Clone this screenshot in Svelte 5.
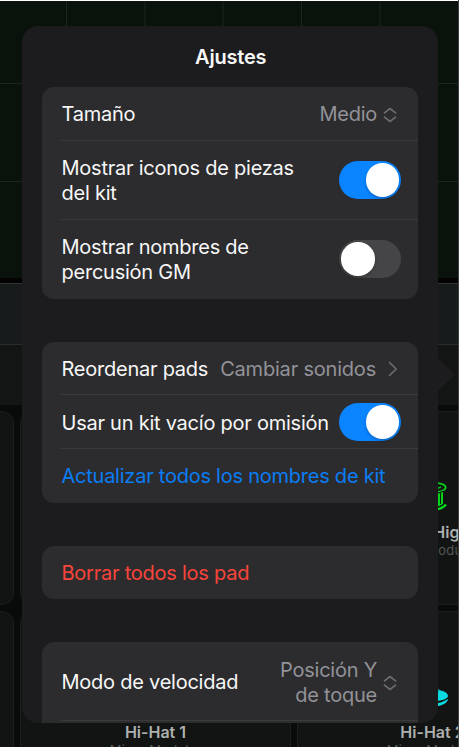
<script lang="ts">
  type Row = {
    label: string;
    kind: 'select' | 'toggle' | 'link' | 'action' | 'danger';
    value?: string;
    on?: boolean;
    size?: string;
  };

  let groups: Row[][] = $state([
    [
      { label: 'Tamaño', kind: 'select', value: 'Medio' },
      { label: 'Mostrar iconos de piezas del kit', kind: 'toggle', on: true, size: 'tall' },
      { label: 'Mostrar nombres de percusión GM', kind: 'toggle', on: false, size: 'tall' }
    ],
    [
      { label: 'Reordenar pads', kind: 'link', value: 'Cambiar sonidos' },
      { label: 'Usar un kit vacío por omisión', kind: 'toggle', on: true },
      { label: 'Actualizar todos los nombres de kit', kind: 'action' }
    ],
    [{ label: 'Borrar todos los pad', kind: 'danger' }],
    [
      { label: 'Modo de velocidad', kind: 'select', value: 'Posición Y de toque', size: 'tall' },
      { label: '', kind: 'action' }
    ]
  ]);

  const pads = [
    { name: '', kit: '', icon: '' },
    { name: '', kit: '', icon: '' },
    { name: 'Tom High', kit: 'Micro Modular', icon: 'drum' },
    { name: '', kit: '', icon: '' },
    { name: 'Hi-Hat 1', kit: 'Micro Modular', icon: 'hat' },
    { name: 'Hi-Hat 2', kit: 'Micro Modular', icon: 'hat' }
  ];
</script>

<div class="screen">
  <div class="timeline">
    <svg width="459" height="277">
      <path class="grid" d="M66.5 0V277M145 0V277M223 0V277M301.5 0V277M380 0V277M0 82.5H459M0 180.5H459" />
    </svg>
  </div>
  <div class="bar upper"></div>
  <div class="bar lower"></div>
  <div class="pads">
    {#each pads as pad}
      <div class="pad">
        {#if pad.icon === 'drum'}
          <svg class="pad-icon" viewBox="0 0 30 30">
            <path d="M3 8v14c3 3 7 4 12 4s8-1 10-3V8z" fill="#06d91d" />
            <path d="M2 24c3 3 8 4.500 13 4.500s10-1.500 13-5" fill="none" stroke="#06d91d" stroke-width="2.600" />
            <ellipse cx="15" cy="6.500" rx="12.700" ry="4.800" fill="#0c2110" stroke="#06d91d" stroke-width="1.600" />
            <path d="M8 6.500c4 2 11 2 15-.5" fill="none" stroke="#06d91d" stroke-width="1.200" />
            <path d="M15 12.500c5 0 8-1 11-2.500M22.500 12v11M14 26.500c5 0 9-1 12-3.500" fill="none" stroke="#0c2110" stroke-width="1.100" />
          </svg>
        {:else if pad.icon === 'hat'}
          <svg class="pad-icon" viewBox="0 0 30 30">
            <path d="M0 14c2-3 8-5 12-5 1-3 7-3 9 0 5 1 9 3 9 6 0 3-7 5-15 5S0 18 0 14z" fill="#0adbe2" />
            <path d="M0 20c5 2 10 2.500 15 2.500S25 21 30 18c0 4-7 7.500-15 7.500S0 24 0 20z" fill="#0adbe2" />
            <circle cx="19.500" cy="10.500" r="0.900" fill="#0c2326" />
          </svg>
        {/if}
        <strong>{pad.name}</strong>
        <span>{pad.kit}</span>
      </div>
    {/each}
  </div>

  <div class="arrow"></div>
  <section class="popover">
    <h1>Ajustes</h1>
    {#each groups as rows}
      <div class="group">
        {#each rows as row}
          <div class="row {row.kind} {row.size ?? ''}">
            <span class="label">{row.label}</span>
            {#if row.value}
              <span class="value">{row.value}</span>
            {/if}
            {#if row.kind === 'select'}
              <svg class="updown" viewBox="0 0 14 16">
                <path d="M1.500 5.800L7 1.500l5.500 4.300M1.500 10.200L7 14.500l5.500-4.300" />
              </svg>
            {:else if row.kind === 'link'}
              <svg class="chevron" viewBox="0 0 10 16">
                <path d="M1.500 1.500L8.200 8l-6.700 6.500" />
              </svg>
            {:else if row.kind === 'toggle'}
              <button
                class="switch"
                class:on={row.on}
                role="switch"
                aria-checked={row.on}
                aria-label={row.label}
                onclick={() => (row.on = !row.on)}
              ></button>
            {/if}
          </div>
        {/each}
      </div>
    {/each}
  </section>
</div>

<style>
  :global(body) {
    background: #fff;
  }

  .screen {
    position: relative;
    box-sizing: border-box;
    width: 459px;
    height: 747px;
    padding-top: 1px;
    overflow: hidden;
    font-family: Inter, 'Liberation Sans', sans-serif;
    background: linear-gradient(#fff 1px, #090b0a 1px);
    border-right: 1px solid #414342;
  }

  .timeline {
    height: 277px;
    background: #09130b;
    border-bottom: 5px solid #020302;
  }

  .timeline svg {
    display: block;
  }

  .grid {
    fill: none;
    stroke: #1b261e;
    stroke-width: 1;
  }

  .bar {
    box-sizing: border-box;
    height: 61px;
    border-top: 1px solid #303433;
    background: #171b1b;
  }

  .bar.lower {
    background: #131514;
    border-top-color: #292c2b;
  }

  .pads {
    display: grid;
    grid-template-columns: repeat(3, 271px);
    grid-auto-rows: 194px;
    gap: 6px;
    margin: 6px 0 0 -257px;
  }

  .pad {
    box-sizing: border-box;
    display: flex;
    flex-direction: column;
    align-items: center;
    padding-top: 69px;
    border: 1px solid #1b1e1d;
    border-radius: 12px;
    background: #111413;
    color: #aeb0af;
  }

  .pad-icon {
    width: 30px;
    height: 30px;
    margin-bottom: 11px;
  }

  .pad strong {
    font-size: 16px;
    font-weight: 600;
    line-height: 20px;
  }

  .pad span {
    font-size: 13px;
    line-height: 17px;
    letter-spacing: 0.2px;
    color: #555857;
  }

  .arrow {
    position: absolute;
    top: 358px;
    left: 438px;
    width: 16px;
    height: 33px;
    background: #1c1c1e;
    clip-path: polygon(0 0, 90% 42%, 100% 50%, 90% 58%, 0 100%);
  }

  .popover {
    position: absolute;
    box-sizing: border-box;
    top: 26px;
    left: 22px;
    width: 416px;
    height: 697px;
    padding: 0 20px 0 19.5px;
    overflow: hidden;
    border-radius: 16px;
    background: #1c1c1e;
    color: #f7f7f7;
  }

  h1 {
    box-sizing: border-box;
    margin: 0;
    height: 61px;
    padding: 1px 0 0 2px;
    font-size: 20px;
    font-weight: 600;
    line-height: 61px;
    letter-spacing: -0.2px;
    text-align: center;
  }

  .group {
    margin-bottom: 43px;
    border-radius: 12px;
    background: #2c2c2e;
  }

  .row {
    position: relative;
    box-sizing: border-box;
    display: flex;
    align-items: center;
    height: 53.7px;
    padding: 0 17px 0 20px;
    font-size: 20px;
    line-height: 25.3px;
    letter-spacing: -0.24px;
  }

  .row.tall {
    height: 79px;
  }

  .row + .row::before {
    content: '';
    position: absolute;
    top: -1px;
    right: 0;
    left: 19.5px;
    height: 1px;
    background: #3b3b3d;
  }

  .label {
    flex: none;
    padding-top: 2px;
  }

  .toggle.tall .label {
    width: 250px;
  }

  .action {
    color: #0a7df5;
  }

  .danger {
    color: #f9443a;
  }

  .value {
    flex: 1;
    padding-top: 2px;
    color: #929298;
    text-align: right;
  }

  .link .value {
    letter-spacing: -0.2px;
  }

  .select.tall .value {
    padding-left: 36px;
  }

  svg.updown,
  svg.chevron {
    flex: none;
    fill: none;
    stroke: #6b6b70;
    stroke-width: 1.7;
    stroke-linecap: round;
    stroke-linejoin: round;
  }

  .updown {
    width: 14px;
    height: 16px;
    margin: 2px 4px 0 6px;
  }

  .chevron {
    width: 10px;
    height: 16px;
    margin: 1px 3px 0 12px;
  }

  .switch {
    flex: none;
    width: 62px;
    height: 38px;
    margin-left: auto;
    padding: 2px;
    border: 0;
    border-radius: 19px;
    background: #454547;
  }

  .switch::before {
    content: '';
    display: block;
    width: 33.5px;
    height: 33.5px;
    border-radius: 50%;
    background: #fff;
    box-shadow: 0 2px 3px #0003;
  }

  .switch.on {
    background: #0a84ff;
  }

  .switch.on::before {
    margin-left: auto;
  }
</style>
